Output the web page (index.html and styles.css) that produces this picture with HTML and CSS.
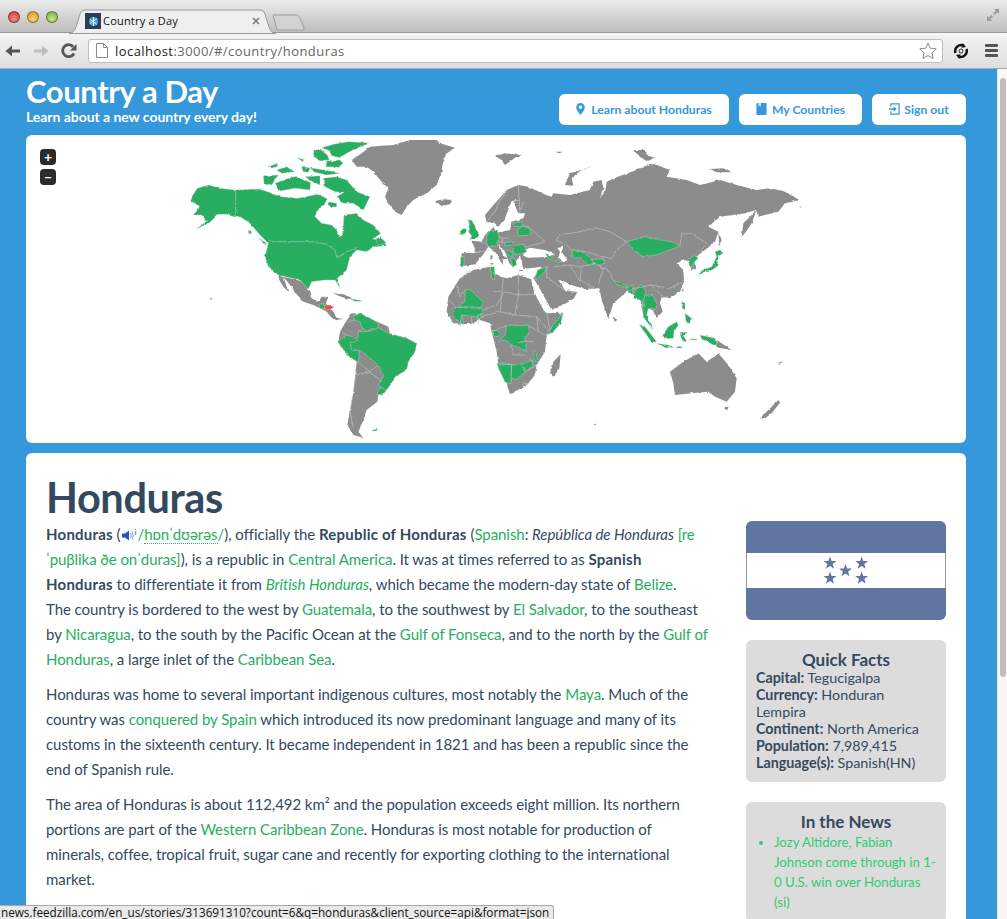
FILE: index.html
```html
<!DOCTYPE html>
<html lang="en">
<head>
<meta charset="utf-8">
<title>Country a Day</title>
<link rel="stylesheet" href="styles.css">
</head>
<body>
<div class="window">
  <div class="tabstrip">
    <div class="lights"><i class="light red"></i><i class="light amber"></i><i class="light lime"></i></div>
    <div class="tab">
      <svg class="tab-shape" width="208" height="25" viewBox="0 0 208 25"><path d="M0 24.500C5 24 6 21 8 15L11 5C12 2 14 1 17 1H190C193 1 195 2 196 5L199 15C201 21 202 24 207 24.500Z" fill="#efefef" stroke="#9a9a9a"/></svg>
      <svg class="favicon" width="16" height="16" viewBox="0 0 16 16"><rect width="16" height="16" fill="#2c3e50"/><circle cx="8.500" cy="8.500" r="4.600" fill="#3f9fe6"/><path d="M5 6.500l7 5M5 10.500l7-5M8.500 4v9" stroke="#fff" stroke-width=".9"/></svg>
      <span class="tab-title">Country a Day</span>
      <svg class="tab-close" width="8" height="8" viewBox="0 0 8 8"><path d="M1 1l6 6M7 1l-6 6" stroke="#777" stroke-width="1.500"/></svg>
    </div>
    <svg class="newtab" width="33" height="17" viewBox="0 0 33 17"><path d="M1 1H24C26 1 27 2 28 4L32 14C32.500 15.500 32 16 30 16H8C6 16 5 15.500 4.500 14Z" fill="#d2d2d2" stroke="#9e9e9e"/></svg>
    <svg class="expand" width="14" height="14" viewBox="0 0 14 14"><path d="M8 1h5v5l-1.800-1.800-2.700 2.700-1.400-1.400 2.700-2.700zM6 13H1V8l1.800 1.800 2.700-2.700 1.400 1.400-2.700 2.700z" fill="#9a9a9a"/></svg>
  </div>
  <div class="toolbar">
    <svg class="navicon" width="16" height="14" viewBox="0 0 16 14"><path d="M15 5.500H7V1.500L.5 7 7 12.500V8.500H15Z" fill="#555"/></svg>
    <svg class="navicon" width="16" height="14" viewBox="0 0 16 14"><path d="M1 5.500H9V1.500L15.500 7 9 12.500V8.500H1Z" fill="#bdbdbd"/></svg>
    <svg class="navicon" width="16" height="16" viewBox="0 0 16 16"><path d="M13 10.500A6 6 0 1 1 12.200 3.700" fill="none" stroke="#555" stroke-width="2.800"/><path d="M15.500 1V7.500H9Z" fill="#555"/></svg>
    <div class="urlbar">
      <svg class="pageicon" width="12" height="15" viewBox="0 0 12 15"><path d="M.5.500H7.500L11.500 4.500V14.500H.5Z M7.500.500V4.500H11.500" fill="#fff" stroke="#8a8a8a"/></svg>
      <span class="url"><b class="url-host">localhost</b>:3000/#/country/honduras</span>
      <svg class="staricon" width="18" height="18" viewBox="0 0 18 18"><path d="M9 1l2.400 5.300 5.800.6-4.300 3.900 1.200 5.700L9 13.600 3.900 16.500l1.200-5.700L.8 6.900l5.800-.6Z" fill="#fff" stroke="#8a8a8a"/></svg>
    </div>
    <svg class="exticon" width="16" height="16" viewBox="0 0 16 16"><path d="M2.500 10A6 6 0 0 1 11 2.800M13.500 6A6 6 0 0 1 5 13.200" fill="none" stroke="#111" stroke-width="2.400"/><path d="M9.500 0L13 4 8.500 4.800ZM6.500 16L3 12 7.500 11.200Z" fill="#111"/><circle cx="8" cy="8" r="2" fill="none" stroke="#333"/></svg>
    <div class="hamburger"><i></i><i></i><i></i></div>
  </div>

  <div class="viewport">
    <main class="page">
      <header class="masthead">
        <div class="brand">
          <h1 class="brand-title">Country a Day</h1>
          <p class="brand-tag">Learn about a new country every day!</p>
        </div>
        <nav class="actions">
          <a class="btn btn-learn"><svg width="9" height="12" viewBox="0 0 10 14"><path fill-rule="evenodd" d="M5 0a5 5 0 0 0-5 5c0 3.500 5 9 5 9s5-5.500 5-9a5 5 0 0 0-5-5zm0 7a2 2 0 1 1 0-4 2 2 0 0 1 0 4z" fill="#3498db"/></svg>Learn about Honduras</a>
          <a class="btn btn-mine"><svg width="11" height="12" viewBox="0 0 11 13"><path d="M1 0H10A1 1 0 0 1 11 1V12A1 1 0 0 1 10 13H1A1 1 0 0 1 0 12V1A1 1 0 0 1 1 0Z" fill="#3498db"/><path d="M2 0H5V4L3.500 3 2 4Z" fill="#bcdcf3"/></svg>My Countries</a>
          <a class="btn btn-out"><svg width="11" height="12" viewBox="0 0 12 13"><path d="M2 4V1H11V12H2V9" fill="none" stroke="#3498db" stroke-width="1.300"/><path d="M0 5.800H5V3.500L8.500 6.500 5 9.500V7.200H0Z" fill="#3498db"/></svg>Sign out</a>
        </nav>
      </header>

      <section class="mapcard">
        <div class="zoomctl"><span class="zoombtn">+</span><span class="zoombtn">−</span></div>
        <svg class="worldmap" width="940" height="308" viewBox="26 135 940 308">
          <defs>
            <filter id="rough" x="0" y="0" width="100%" height="100%" color-interpolation-filters="sRGB">
              <feTurbulence type="fractalNoise" baseFrequency=".22" numOctaves="2" seed="4"/>
              <feDisplacementMap in="SourceGraphic" scale="2.600" xChannelSelector="R" yChannelSelector="G"/>
            </filter>
          </defs>
          <g class="roughmap">
          <g transform="translate(140 135) scale(.33333)">
            <path class="land" d="M635 75L665 55 690 35 725 32 760 30 810 15 890 15 900 25 945 38 917 58 908 85 905 110 890 150 860 175 820 195 800 215 785 240 765 230 745 205 735 185 745 160 725 140 700 110 680 95 650 95Z"/>
            <path class="land" d="M885 198L910 193 938 195 930 208 905 213Z"/>
            <path class="land" d="M415 422L450 430 480 437 495 445 505 465 515 490 535 500 545 485 565 485 558 505 565 515 580 530 590 548 610 552 600 552 590 556 575 548 560 530 540 520 520 510 490 500 470 478 450 450 430 425 445 470 430 455 418 435Z"/>
            <path class="land" d="M578 475L610 478 638 490 625 492 600 484Z"/>
            <path class="land" d="M635 535L660 535 700 555 745 575 750 595 800 610 830 625 825 650 805 680 800 705 765 725 740 765 715 780 712 800 680 825 668 860 655 890 670 908 640 900 622 870 630 825 640 770 650 680 620 660 595 622 600 590 615 565Z"/>
            <path class="visited" d="M152 197L160 178 172 160 205 150 240 160 287 165 330 163 360 162 400 178 430 186 470 190 500 185 530 178 548 184 562 192 555 205 530 230 525 245 545 265 575 270 590 285 598 305 607 300 610 270 612 240 650 235 670 255 700 270 722 295 700 312 735 318 738 333 700 335 680 350 650 345 630 365 625 385 620 405 592 430 600 460 585 435 555 435 515 440 505 462 480 435 450 428 415 420 385 395 375 365 385 325 360 300 330 265 300 245 260 238 235 238 210 262 168 283 200 258 185 240 160 240 180 215Z"/>
            <path class="visited" d="M550 130L590 125 620 135 650 170 690 185 670 225 640 205 610 205 590 185 612 172 585 170 555 155Z"/>
            <path class="visited" d="M545 38L580 28 625 20 690 24 650 40 620 55 600 68 575 62 570 48ZM518 48L540 42 562 60 568 75 540 78 522 65ZM560 78L600 75 608 85 598 97 558 95Z"/>
            <path class="visited" d="M510 98L570 108 600 115 560 120 525 112ZM385 95L412 85 412 95 392 100ZM410 105L440 95 465 110 425 115ZM470 68L495 75 490 80ZM485 95L510 98 505 112 490 110ZM370 122L415 120 395 150 372 145ZM405 145L450 128 470 124 490 135 512 142 510 165 465 160 420 168ZM495 125L540 122 540 150 518 140ZM565 200L590 205 590 216 570 215ZM325 285L335 290 333 298 326 295ZM355 310L380 325 375 330ZM708 312L722 305 738 325 715 330Z"/>
            <path class="visited" d="M210 489h6v4h-6ZM635 492L655 495 670 499 640 499ZM695 885L712 882 710 888 697 888Z"/>
            <path class="visited" d="M537 510L550 505 556 512 552 522 540 520Z"/>
            <path class="current" d="M552 512L566 510 582 516 573 522 560 524 556 520Z"/>
            <path class="visited" d="M640 540L660 535 695 552 715 565 712 585 695 580 680 590 665 575 660 560 640 555Z"/>
            <path class="visited" d="M655 590L680 590 700 585 715 578 745 595 800 610 830 625 825 650 805 680 800 705 765 725 755 745 735 770 715 750 730 725 715 690 690 670 660 645 635 645 630 625 655 605Z"/>
            <path class="visited" d="M593 620L620 600 635 605 655 615 630 625 635 645 658 648 655 682 625 662Z"/>
            <path class="visited" d="M710 778L720 755 738 768 728 780Z"/>
            <path class="rule" d="M287 165V238M385 320H520L560 328 585 345 590 367 620 350 650 340M655 682L690 710 715 690M650 720L690 710 725 740M650 700L640 770 630 830 640 880M615 565L640 555M600 590L620 600"/>
          </g>
          <g transform="translate(470 135) scale(.33333)">
            <path class="land" d="M228 180L245 185 250 175 300 180 360 165 370 140 395 135 400 160 390 190 405 170 410 140 435 128 500 105 545 85 600 105 590 125 650 135 690 150 750 135 800 150 860 165 900 160 940 168 988 195 945 205 925 230 865 245 858 225 825 235 790 240 750 245 715 275 745 290 735 320 705 345 685 360 670 375 680 400 665 408 655 378 640 375 620 385 640 405 642 440 630 470 600 490 575 485 570 505 578 530 560 548 547 525 530 520 525 540 552 585 520 545 510 490 490 478 470 470 430 505 415 552 395 495 388 460 345 462 310 452 285 440 265 435 285 465 322 472 310 492 245 525 200 445 190 430 215 395 160 402 155 380 150 365 140 375 130 398 118 385 105 350 85 325 100 362 112 372 100 372 98 390 75 350 55 335 40 358 15 388 -15 392 -28 390 -25 355 20 353 10 330 5 317 35 320 45 300 60 287 70 275 80 293 120 285 125 260 160 250 165 235 145 235 130 200 148 195 125 198 120 210 105 250 85 275 72 262 50 262 45 240 75 205 110 165 145 150 175 155Z"/>
            <path class="water" d="M165 345L180 338 225 345 255 358 230 366 175 368 160 360ZM262 338L280 335 275 350 292 375 280 382 265 370 270 350Z"/>
            <path class="land" d="M75 62L105 55 155 60 130 72 105 90 90 72ZM285 150L300 115 365 95 330 108 305 130 310 152ZM490 45L525 45 535 62 555 68 530 78 505 62ZM720 102L760 100 785 112 740 112ZM255 50h25l-12 5ZM815 305L820 265 860 225 845 265 828 290ZM745 290L755 315 748 330ZM635 465l5-5v12ZM430 545l8 8-3 8-6-6ZM240 715L250 680 272 658 268 700 250 725ZM600 710L640 680 685 655 710 680 740 660 745 655 775 690 800 730 795 770 770 800 735 785 715 770 665 775 615 780 610 745ZM760 815h16l-6 14ZM870 850L905 815 925 795 930 803 905 835 885 850ZM740 615L785 645 755 640 738 635ZM62 360l6 2-2 14-5-3ZM60 385h12l-6 5ZM145 405h14v3h-14Z"/>
            <path class="land" d="M-65 485L-30 430 10 405 60 395 75 420 110 430 145 420 183 432 192 470 215 515 228 535 280 533 260 570 230 600 225 650 200 690 195 720 170 750 120 778 105 730 85 690 80 650 65 590 60 565 30 555 0 568 -50 565 -70 530Z"/>
            <path class="visited" d="M470 320L525 305 570 315 605 320 630 332 600 345 560 360 520 365 495 350Z"/>
            <path class="visited" d="M305 350L325 345 350 360 375 385 355 393 335 370 310 367ZM365 375L400 370 405 385 375 392Z"/>
            <path class="visited" d="M655 375L672 362 685 368 670 385 668 395 658 392ZM685 425L692 408 725 395 740 365 735 350 750 345 760 355 745 360 742 395 715 410 695 412ZM745 318l6 14-5-2Z"/>
            <path class="visited" d="M430 435L470 452 468 458 440 448ZM472 455L490 450 488 478 472 470ZM490 478L500 460 515 448 528 470 520 490 525 515 510 495 490 490ZM520 485L545 478 562 505 558 522 535 520 530 540 548 585 520 545 518 510Z"/>
            <path class="visited" d="M507 568L525 575 560 620 545 622ZM560 625L605 632 610 638 575 634ZM578 600L595 575 620 560 625 570 612 590 610 610 585 612ZM630 592L650 592 640 602 650 618 640 620 632 605ZM635 500L645 505 645 525 637 520ZM645 535L665 550 660 562 648 560ZM690 600L735 610 740 635 715 622 695 612ZM662 612h18v3h-18ZM620 635h18v4h-18Z"/>
            <path class="visited" d="M110 572L175 572 178 590 165 610 170 650 150 640 125 630 105 615 85 620 105 600ZM65 590L80 585 90 595 85 605 72 605ZM80 685L125 688 122 745 105 742 88 705ZM125 690L155 688 165 712 140 733 123 733ZM155 688L185 675 190 690 170 708ZM190 645L198 650 203 680 193 675ZM230 600L250 570 270 545 280 533 272 565 250 590Z"/>
            <path class="visited" d="M925 683l12-3-2 4-8 2ZM370 867h8v3h-8ZM985 213l10 4h-6Z"/>
            <path class="rule" d="M258 315L270 300 330 290 375 278 420 290 470 320 440 345 425 370 395 365 350 350 305 345 290 330 258 315ZM630 332L635 295 665 295 710 325 690 350M390 400L410 400 430 435M335 395L330 435 375 460M300 390L330 395 375 385 400 400 385 450M250 395L300 390 330 440M230 425L280 465 322 472M145 420L145 480 195 478M100 430L95 480 90 530 35 545M70 470L95 470 145 480 135 540 200 545 240 590M195 478L190 450M90 530L135 540M65 590L110 572M175 572L225 600M125 630L130 660 165 660 190 680M85 690L125 688M125 733L120 745M170 708L200 690M165 745L178 745M135 345L225 320M60 300L105 310 140 305M20 353L60 345M80 293L85 320 110 325M150 230L160 200M140 270L175 275 225 320M175 275L165 300M100 310L95 325M50 262L75 230 90 195 110 170M145 150L150 230M35 320L60 335M60 300L55 335M230 425L230 395M470 470L500 460 540 450 580 485M640 440L600 460 540 450M140 620L190 620M200 545L205 590M240 590L230 530"/>
            <circle class="rule" cx="163" cy="750" r="5"/>
          </g>
          <g transform="translate(440 210) scale(.33333)">
            <path class="visited" d="M85 32L95 30 100 40 110 60 120 75 115 82 90 88 95 78 85 65 90 50ZM60 60L75 55 78 70 62 75Z"/>
            <path class="visited" d="M140 75L152 62 172 62 178 85 170 100 175 108 150 110 140 100ZM232 60L250 48 270 60 272 75 235 78ZM218 40L245 36 250 48 225 50ZM222 108L250 102 260 125 232 135 218 125ZM190 120L215 125 220 140 205 135ZM210 145L225 145 230 165 218 170ZM195 97L222 95 215 105 195 108ZM62 142L72 140 72 170 62 170ZM152 170L163 170 165 205 155 205ZM292 180L325 170 310 190 292 205 285 210ZM315 130L345 148 362 155 355 158 325 145Z"/>
            <path class="visited" d="M75 240L90 238 132 278 118 292 70 290 50 292 75 275ZM35 312L50 292 125 295 130 310 110 320 65 315 72 345 45 325ZM113 315L125 310 120 330 112 330Z"/>
            <path class="rule" d="M50 225L60 260 75 240M25 270L50 292M65 205L75 190 100 175M130 300L170 285 190 250M115 320V345M65 315L60 350M95 320V345"/>
          </g>
          </g>
        </svg>
      </section>

      <section class="articlecard">
        <h2 class="country">Honduras</h2>
        <div class="columns">
          <article class="summary">
            <p><b>Honduras</b> (<svg class="speaker" width="12" height="11" viewBox="0 0 12 11"><path d="M0 3.500H3L7 .5V10.500L3 7.500H0Z" fill="#1f56b8"/><path d="M8.500 3Q10 5.500 8.500 8M10 1.500Q12.500 5.500 10 9.500" fill="none" stroke="#7d9bd6"/></svg><span class="tinyi">i</span><span class="ipa">/<span class="ipa-under">hɒnˈdʊərəs</span>/</span>), officially the <b>Republic of Honduras</b> (<a>Spanish</a>: <i>República de Honduras</i> <a class="ipa">[re ˈpuβlika ðe onˈduras]</a>), is a republic in <a>Central America</a>. It was at times referred to as <b>Spanish</b><br><b>Honduras</b> to differentiate it from <a><i>British Honduras</i></a>, which became the modern-day state of <a>Belize</a>.<br>The country is bordered to the west by <a>Guatemala</a>, to the southwest by <a>El Salvador</a>, to the southeast by <a>Nicaragua</a>, to the south by the Pacific Ocean at the <a>Gulf of Fonseca</a>, and to the north by the <a>Gulf of Honduras</a>, a large inlet of the <a>Caribbean Sea</a>.</p>
            <p>Honduras was home to several important indigenous cultures, most notably the <a>Maya</a>. Much of the country was <a>conquered by Spain</a> which introduced its now predominant language and many of its customs in the sixteenth century. It became independent in 1821 and has been a republic since the end of Spanish rule.</p>
            <p>The area of Honduras is about 112,492 km² and the population exceeds eight million. Its northern portions are part of the <a>Western Caribbean Zone</a>. Honduras is most notable for production of minerals, coffee, tropical fruit, sugar cane and recently for exporting clothing to the international market.</p>
          </article>
          <aside class="sidebar">
            <svg class="flag" width="200" height="99" viewBox="0 0 200 99">
              <rect class="flag-band" width="200" height="99"/>
              <rect y="32" width="200" height="35" fill="#fff"/>
              <path class="flag-edge" d="M.5 32V67M199.500 32V67"/>
              <path class="flag-star" d="M84 35.500l1.600 4.600h4.900l-3.900 3 1.400 4.700-4-2.800-4 2.800 1.400-4.700-3.900-3h4.900ZM115.700 35.500l1.600 4.600h4.900l-3.900 3 1.400 4.700-4-2.800-4 2.800 1.400-4.700-3.900-3h4.900ZM99.500 43l1.600 4.600H106l-3.900 3 1.400 4.700-4-2.800-4 2.800 1.400-4.700-3.900-3h4.900ZM84 50.500l1.600 4.600h4.900l-3.900 3 1.400 4.700-4-2.800-4 2.800 1.400-4.700-3.900-3h4.900ZM115.700 50.500l1.600 4.600h4.900l-3.900 3 1.400 4.700-4-2.800-4 2.800 1.400-4.700-3.900-3h4.900Z"/>
            </svg>
            <div class="panel facts">
              <h3 class="panel-title">Quick Facts</h3>
              <div><b>Capital:</b> Tegucigalpa</div>
              <div><b>Currency:</b> Honduran Lempira</div>
              <div><b>Continent:</b> North America</div>
              <div><b>Population:</b> 7,989,415</div>
              <div><b>Language(s):</b> Spanish(HN)</div>
            </div>
            <div class="panel news">
              <h3 class="panel-title">In the News</h3>
              <ul class="newslist">
                <li><a>Jozy Altidore, Fabian Johnson come through in 1-0 U.S. win over Honduras (si)</a></li>
              </ul>
            </div>
          </aside>
        </div>
      </section>
    </main>
    <div class="scrollbar"><div class="thumb"></div></div>
  </div>
  <div class="statusbar">news.feedzilla.com/en_us/stories/313691310?count=6&amp;q=honduras&amp;client_source=api&amp;format=json</div>
</div>
</body>
</html>
```
FILE: styles.css
```css
* { box-sizing: border-box; }
html, body { margin: 0; height: 100%; overflow: hidden; }
body { font-family: Lato, "Noto Sans", sans-serif; color: #34495e; background: #3498db; }
.window { position: relative; height: 919px; display: flex; flex-direction: column; overflow: hidden; }

/* browser chrome */
.tabstrip { height: 33px; flex: none; display: flex; align-items: flex-start; padding-left: 8px; position: relative;
  background: linear-gradient(#ececec, #bdbdbd); border-bottom: 1px solid #9a9a9a; }
.lights { display: flex; gap: 7px; margin-top: 11px; width: 60px; }
.light { width: 12px; height: 12px; border-radius: 50%; border: 1px solid rgba(0,0,0,.35); }
.red { background: radial-gradient(circle at 50% 70%, #f58a85, #d0302c); }
.amber { background: radial-gradient(circle at 50% 70%, #f9d27c, #d98f1e); }
.lime { background: radial-gradient(circle at 50% 70%, #c5e88d, #6fa83c); }
.tab { position: relative; width: 207px; height: 24px; margin: 9px 0 0 1px; display: flex; align-items: center; padding: 0 0 1px 16px; }
.tab-shape { position: absolute; left: 0; top: 0; }
.favicon, .tab-title, .tab-close { position: relative; }
.tab-title { font: 11px "Open Sans", "DejaVu Sans", sans-serif; color: #111; margin-left: 2px; width: 148px; white-space: nowrap; letter-spacing: .2px; }
.tab-close { margin-left: 1px; }
.newtab { margin: 14px 0 0 -4px; }
.expand { margin: 8px 7px 0 auto; }

.toolbar { height: 36px; flex: none; display: flex; align-items: center; padding: 0 8px 0 5px;
  background: linear-gradient(#f4f4f4, #dedede); border-bottom: 1px solid #a8a8a8; }
.navicon { margin-right: 12px; flex: none; }
.navicon + .navicon + .navicon { margin-right: 11px; margin-left: 0; }
.urlbar { flex: none; width: 855px; height: 24px; background: #fff; border: 1px solid #bdbdbd; border-radius: 3px; display: flex; align-items: center; padding: 0 5px 0 7px; }
.pageicon { flex: none; }
.url { margin-left: 7px; font: 13px "Open Sans", "DejaVu Sans", sans-serif; color: #666; letter-spacing: .44px; white-space: nowrap; }
.url-host { font-weight: 400; color: #222; }
.staricon { margin-left: auto; }
.exticon { margin-left: 10px; flex: none; }
.hamburger { margin-left: 16px; display: flex; flex-direction: column; gap: 2px; width: 13px; }
.hamburger i { height: 3px; background: #555; border-radius: 1px; }

/* viewport */
.viewport { flex: 1; min-height: 0; display: flex; overflow: hidden; }
.page { width: 997px; flex: none; padding-left: 26px; }
.scrollbar { flex: 1; background: #f7f7f7; border-left: 1px solid #e4e4e4; padding: 9px 1px 0 2px; }
.thumb { height: 599px; background: #bfbfbf; border-radius: 4px; }

.masthead { width: 940px; height: 66px; display: flex; justify-content: space-between; align-items: flex-start; }
.brand { padding-top: 6px; color: #fff; }
.brand-title { margin: 0; font-size: 31px; line-height: 32px; font-weight: 700; letter-spacing: -.38px; }
.brand-tag { margin: 1px 0 0; font-size: 14px; line-height: 18px; font-weight: 700; letter-spacing: -.05px; }
.actions { display: flex; gap: 10px; padding-top: 25px; }
.btn { height: 31px; padding-bottom: 1px; display: flex; align-items: center; justify-content: center; gap: 6px; background: #fff; border-radius: 6px;
  color: #3498db; font-size: 12.200px; font-weight: 700; white-space: nowrap; }
.btn-learn { width: 170px; }
.btn-mine { width: 123px; gap: 5px; }
.btn-out { width: 94px; gap: 4px; }

.mapcard { position: relative; width: 940px; height: 308px; background: #fff; border-radius: 6px; overflow: hidden; }
.worldmap { display: block; }
.roughmap { filter: url(#rough); }
.zoomctl { position: absolute; left: 14px; top: 14px; display: flex; flex-direction: column; gap: 4px; }
.zoombtn { width: 16px; height: 16px; border-radius: 4px; background: #2b2b2b; color: #fff; font-size: 14px; line-height: 15px; font-weight: 700; text-align: center; }
.land { fill: #8c8c8c; }
.water { fill: #fff; }
.visited { fill: #27ae60; stroke: #d6d6d6; stroke-width: 1.200; }
.current { fill: #e74c3c; stroke: #e6e6e6; stroke-width: 1; }
.rule { fill: none; stroke: #c9c9c9; stroke-width: 1.800; }

.articlecard { width: 940px; margin-top: 10px; background: #fff; border-radius: 6px; padding: 0 20px; height: 600px; }
.country { margin: 0; padding-top: 19px; font-size: 41.500px; line-height: 50px; font-weight: 700; letter-spacing: -.4px; color: #34495e; }
.columns { display: flex; justify-content: space-between; align-items: flex-start; }
.summary { width: 664px; font-size: 15px; line-height: 25px; letter-spacing: -.06px; }
.summary b { letter-spacing: .22px; }
.summary p { margin: 0 0 10px; }
.summary a { color: #27ae60; }
.speaker { vertical-align: -1px; margin-left: 1px; }
.tinyi { font-size: 8px; vertical-align: 5px; color: #1f56b8; line-height: 0; margin: 0 1px; }
.ipa { font-family: Lato, "DejaVu Sans", sans-serif; font-size: 15px; color: #27ae60; }
.ipa-under { border-bottom: 1px dotted #27ae60; }
.sidebar { width: 200px; flex: none; margin-top: -1px; }
.flag { display: block; border-radius: 6px; }
.flag-band, .flag-star { fill: #6175a1; }
.flag-edge { stroke: #9a9a9a; fill: none; }
.panel { margin-top: 20px; background: #dcdcdc; border-radius: 6px; padding: 10px; font-size: 14.300px; line-height: 17px; }
.panel-title { margin: 0; text-align: center; font-size: 17px; line-height: 19px; font-weight: 700; }
.facts { height: 142px; }
.newslist { margin: 1px 0 0; padding: 0 0 0 18px; font-size: 13.200px; line-height: 20px; color: #2ecc71; }
.newslist a { color: #2ecc71; }

.statusbar { position: absolute; left: 0; top: 905px; width: 554px; height: 14px; padding-left: 1px; background: #e9e9e9; border: 1px solid #a8a8a8; border-left: 0; border-bottom: 0; border-top-right-radius: 3px;
  font: 11.730px/13px "Open Sans", "DejaVu Sans", sans-serif; color: #111; white-space: nowrap; overflow: hidden; }
```
